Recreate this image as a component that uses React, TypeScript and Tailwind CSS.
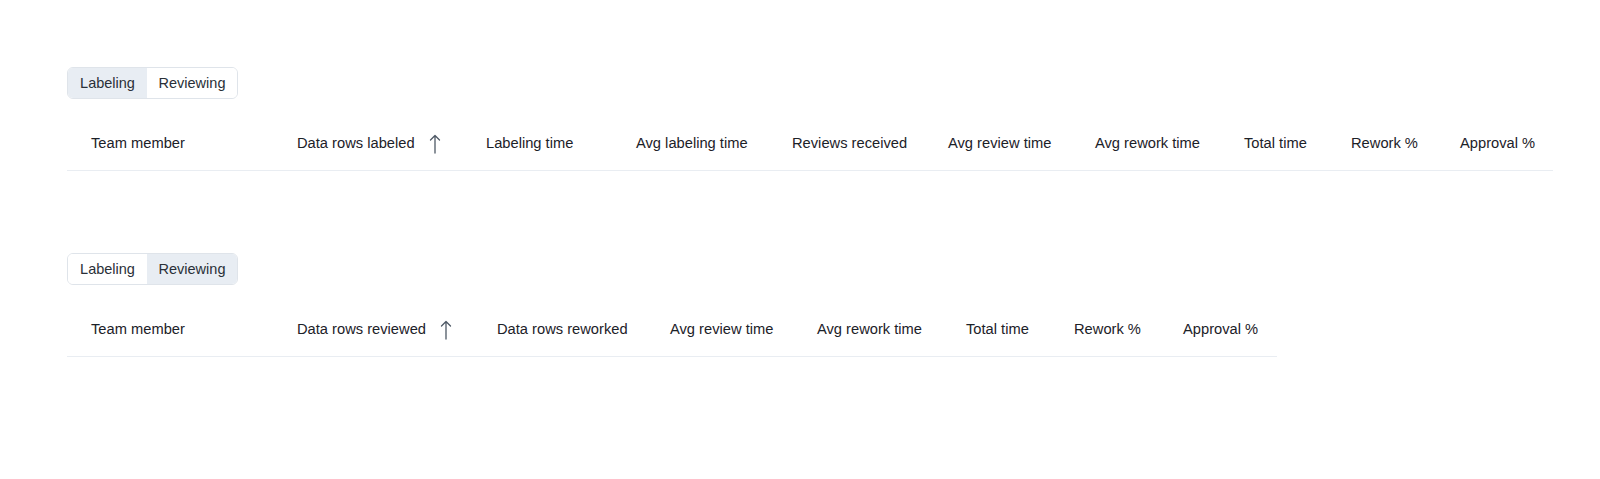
type Col = { label: string; width: number; sorted?: boolean }

const labelingCols: Col[] = [
  { label: 'Team member', width: 206 },
  { label: 'Data rows labeled', width: 189, sorted: true },
  { label: 'Labeling time', width: 150 },
  { label: 'Avg labeling time', width: 156 },
  { label: 'Reviews received', width: 156 },
  { label: 'Avg review time', width: 147 },
  { label: 'Avg rework time', width: 149 },
  { label: 'Total time', width: 107 },
  { label: 'Rework %', width: 109 },
  { label: 'Approval %', width: 117 },
]

const reviewingCols: Col[] = [
  { label: 'Team member', width: 206 },
  { label: 'Data rows reviewed', width: 200, sorted: true },
  { label: 'Data rows reworked', width: 173 },
  { label: 'Avg review time', width: 147 },
  { label: 'Avg rework time', width: 149 },
  { label: 'Total time', width: 108 },
  { label: 'Rework %', width: 109 },
  { label: 'Approval %', width: 118 },
]

function SortArrow() {
  return (
    <svg width="12" height="20" viewBox="0 0 12 20" className="ml-[14px] text-[#4f5966]" fill="none">
      <path d="M6 1.5V19M1.5 6L6 1.5L10.5 6" stroke="currentColor" strokeWidth="1.3" strokeLinecap="round" strokeLinejoin="round" />
    </svg>
  )
}

function Toggle({ active }: { active: 'labeling' | 'reviewing' }) {
  const base = 'h-full flex items-center justify-center pt-[2px] text-[14.5px] text-[#2a3038]'
  return (
    <div className="inline-flex h-8 rounded-md border border-[#dfe4ea] overflow-hidden bg-white">
      <div className={`${base} w-[79px] ${active === 'labeling' ? 'bg-[#e8edf3]' : 'bg-white'}`}>
        Labeling
      </div>
      <div className={`${base} w-[90px] ${active === 'reviewing' ? 'bg-[#e8edf3]' : 'bg-white'}`}>
        Reviewing
      </div>
    </div>
  )
}

function HeaderRow({ cols }: { cols: Col[] }) {
  return (
    <div className="mt-4 flex h-14 pt-[2px] border-b border-[#e9edf2] w-fit">
      {cols.map((c) => (
        <div
          key={c.label}
          style={{ width: c.width }}
          className="flex items-center pl-6 text-[14.7px] text-[#1c2128] whitespace-nowrap"
        >
          {c.label}
          {c.sorted && <SortArrow />}
        </div>
      ))}
    </div>
  )
}

export default function App() {
  return (
    <div
      className="w-[1600px] h-[479px] bg-white px-[67px] pt-[67px]"
      style={{ fontFamily: '"Liberation Sans", Arial, sans-serif' }}
    >
      <Toggle active="labeling" />
      <HeaderRow cols={labelingCols} />
      <div className="h-[82px]" />
      <Toggle active="reviewing" />
      <HeaderRow cols={reviewingCols} />
    </div>
  )
}
